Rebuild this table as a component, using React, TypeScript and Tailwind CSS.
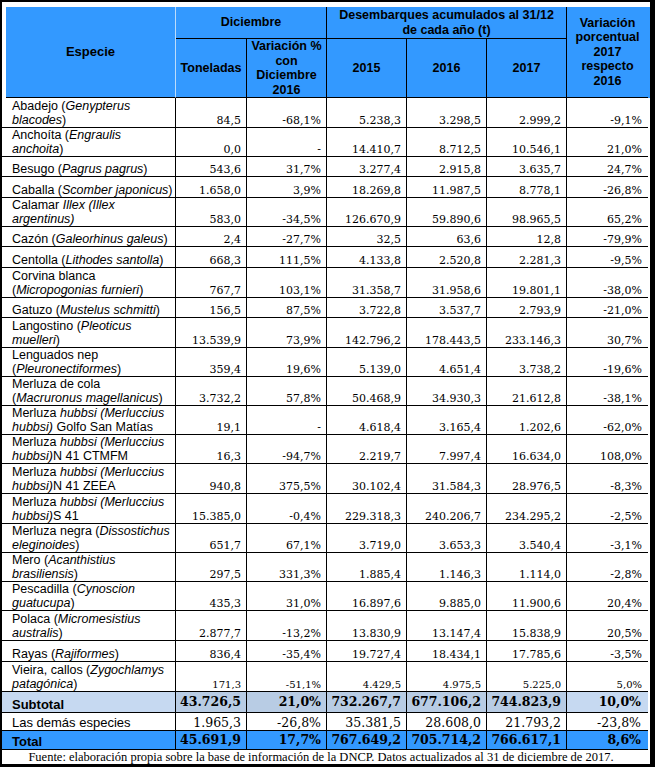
import React from "react";

type Row = { h: string; name: React.ReactNode; v: string[]; small?: boolean };

const rows: Row[] = [
  { h: "h-[30px]", name: <>Abadejo (<i>Genypterus</i><br /><i>blacodes</i>)</>, v: ["84,5", "-68,1%", "5.238,3", "3.298,5", "2.999,2", "-9,1%"] },
  { h: "h-[29px]", name: <>Anchoíta (<i>Engraulis</i><br /><i>anchoita</i>)</>, v: ["0,0", "-", "14.410,7", "8.712,5", "10.546,1", "21,0%"] },
  { h: "h-[20px]", name: <>Besugo (<i>Pagrus pagrus</i>)</>, v: ["543,6", "31,7%", "3.277,4", "2.915,8", "3.635,7", "24,7%"] },
  { h: "h-[21px]", name: <>Caballa (<i>Scomber japonicus</i>)</>, v: ["1.658,0", "3,9%", "18.269,8", "11.987,5", "8.778,1", "-26,8%"] },
  { h: "h-[29px]", name: <>Calamar <i>Illex (Illex</i><br /><i>argentinus)</i></>, v: ["583,0", "-34,5%", "126.670,9", "59.890,6", "98.965,5", "65,2%"] },
  { h: "h-[20px]", name: <>Cazón (<i>Galeorhinus galeus</i>)</>, v: ["2,4", "-27,7%", "32,5", "63,6", "12,8", "-79,9%"] },
  { h: "h-[21px]", name: <>Centolla (<i>Lithodes santolla</i>)</>, v: ["668,3", "111,5%", "4.133,8", "2.520,8", "2.281,3", "-9,5%"] },
  { h: "h-[30px]", name: <>Corvina blanca<br />(<i>Micropogonias furnieri</i>)</>, v: ["767,7", "103,1%", "31.358,7", "31.958,6", "19.801,1", "-38,0%"] },
  { h: "h-[20px]", name: <>Gatuzo (<i>Mustelus schmitti</i>)</>, v: ["156,5", "87,5%", "3.722,8", "3.537,7", "2.793,9", "-21,0%"] },
  { h: "h-[30px]", name: <>Langostino (<i>Pleoticus</i><br /><i>muelleri</i>)</>, v: ["13.539,9", "73,9%", "142.796,2", "178.443,5", "233.146,3", "30,7%"] },
  { h: "h-[29px]", name: <>Lenguados nep<br />(<i>Pleuronectiformes</i>)</>, v: ["359,4", "19,6%", "5.139,0", "4.651,4", "3.738,2", "-19,6%"] },
  { h: "h-[29px]", name: <>Merluza de cola<br />(<i>Macruronus magellanicus</i>)</>, v: ["3.732,2", "57,8%", "50.468,9", "34.930,3", "21.612,8", "-38,1%"] },
  { h: "h-[29px]", name: <>Merluza <i>hubbsi (Merluccius</i><br /><i>hubbsi)</i> Golfo San Matías</>, v: ["19,1", "-", "4.618,4", "3.165,4", "1.202,6", "-62,0%"] },
  { h: "h-[29px]", name: <>Merluza <i>hubbsi (Merluccius</i><br /><i>hubbsi)</i>N 41 CTMFM</>, v: ["16,3", "-94,7%", "2.219,7", "7.997,4", "16.634,0", "108,0%"] },
  { h: "h-[30px]", name: <>Merluza <i>hubbsi (Merluccius</i><br /><i>hubbsi)</i>N 41 ZEEA</>, v: ["940,8", "375,5%", "30.102,4", "31.584,3", "28.976,5", "-8,3%"] },
  { h: "h-[30px]", name: <>Merluza <i>hubbsi (Merluccius</i><br /><i>hubbsi)</i>S 41</>, v: ["15.385,0", "-0,4%", "229.318,3", "240.206,7", "234.295,2", "-2,5%"] },
  { h: "h-[29px]", name: <>Merluza negra (<i>Dissostichus</i><br /><i>eleginoides</i>)</>, v: ["651,7", "67,1%", "3.719,0", "3.653,3", "3.540,4", "-3,1%"] },
  { h: "h-[29px]", name: <>Mero (<i>Acanthistius</i><br /><i>brasiliensis</i>)</>, v: ["297,5", "331,3%", "1.885,4", "1.146,3", "1.114,0", "-2,8%"] },
  { h: "h-[29px]", name: <>Pescadilla (<i>Cynoscion</i><br /><i>guatucupa</i>)</>, v: ["435,3", "31,0%", "16.897,6", "9.885,0", "11.900,6", "20,4%"] },
  { h: "h-[30px]", name: <>Polaca (<i>Micromesistius</i><br /><i>australis</i>)</>, v: ["2.877,7", "-13,2%", "13.830,9", "13.147,4", "15.838,9", "20,5%"] },
  { h: "h-[21px]", name: <>Rayas (<i>Rajiformes</i>)</>, v: ["836,4", "-35,4%", "19.727,4", "18.434,1", "17.785,6", "-3,5%"] },
  { h: "h-[30px]", name: <>Vieira, callos (<i>Zygochlamys</i><br /><i>patagónica</i>)</>, v: ["171,3", "-51,1%", "4.429,5", "4.975,5", "5.225,0", "5,0%"], small: true },
];

const cols = "grid grid-cols-[174px_71px_80px_80px_80px_80px_81px]";

function BodyRow({ r }: { r: Row }) {
  return (
    <div className={`${cols} ${r.h} border-b border-black`}>
      <div className="flex items-end pl-[10px] border-r border-black text-[12.5px] leading-[14px] whitespace-nowrap">
        <div>{r.name}</div>
      </div>
      {r.v.map((v, i) => (
        <div
          key={i}
          className={`flex items-end justify-end ${i === 5 ? "pr-[6px]" : "pr-[5px] border-r border-black"} font-['DejaVu_Serif',serif] ${r.small ? "text-[10px]" : "text-[11px]"} leading-[13px] whitespace-nowrap`}
        >
          {v}
        </div>
      ))}
    </div>
  );
}

export default function App() {
  return (
    <div className="w-[655px] h-[767px] bg-white border-t-2 border-l-2 border-r-[5px] border-b-[3px] border-black flex flex-col font-['Liberation_Sans',Arial,sans-serif] text-black overflow-hidden">
      <div className="pt-[5px] pl-[4px]">
        <div className="grid grid-cols-[170px_71px_80px_80px_80px_80px_81px] grid-rows-[32px_59px] bg-[#3399ff] font-bold text-[12.5px] leading-[14.5px] text-center">
          <div className="row-span-2 flex items-center justify-center border-b border-r border-b-black border-r-[#bcdcfb] text-[13px]">
            Especie
          </div>
          <div className="col-span-2 flex items-center justify-center border-b border-r border-black">
            Diciembre
          </div>
          <div className="col-span-3 flex items-center justify-center border-b border-r border-black">
            Desembarques acumulados al 31/12
            <br />
            de cada año (t)
          </div>
          <div className="row-span-2 flex items-center justify-center border-b border-black">
            Variación
            <br />
            porcentual
            <br />
            2017
            <br />
            respecto
            <br />
            2016
          </div>
          <div className="flex items-center justify-center border-b border-r border-black">Toneladas</div>
          <div className="flex items-center justify-center border-b border-r border-black">
            Variación %
            <br />
            con
            <br />
            Diciembre
            <br />
            2016
          </div>
          <div className="flex items-center justify-center border-b border-r border-black">2015</div>
          <div className="flex items-center justify-center border-b border-r border-black">2016</div>
          <div className="flex items-center justify-center border-b border-r border-black">2017</div>
        </div>
      </div>

      <div className="w-[646px] flex flex-col">
        {rows.map((r, i) => (
          <BodyRow key={i} r={r} />
        ))}

        {/* Subtotal */}
        <div className={`${cols} h-[21px] border-b border-black`}>
          <div className="flex items-end pl-[10px] border-r border-black bg-[#c6d9f1] text-[13px] leading-[14px] font-bold">
            Subtotal
          </div>
          {["43.726,5", "21,0%", "732.267,7", "677.106,2", "744.823,9", "10,0%"].map((v, i) => (
            <div
              key={i}
              className={`flex items-center justify-end font-['DejaVu_Serif',serif] font-bold text-[12.5px] leading-[14px] ${i === 5 ? "pr-[7px] bg-[#c6d9f1]" : "pr-[5px] border-r border-black bg-[#b8cce4]"}`}
            >
              {v}
            </div>
          ))}
        </div>

        {/* Las demás especies */}
        <div className={`${cols} h-[18px] border-b border-black`}>
          <div className="flex items-end pl-[10px] border-r border-black text-[13px] leading-[14px]">
            Las demás especies
          </div>
          {["1.965,3", "-26,8%", "35.381,5", "28.608,0", "21.793,2", "-23,8%"].map((v, i) => (
            <div
              key={i}
              className={`flex items-end justify-end font-['DejaVu_Serif',serif] text-[12.5px] leading-[14px] ${i === 5 ? "pr-[7px]" : "pr-[5px] border-r border-black"}`}
            >
              {v}
            </div>
          ))}
        </div>

        {/* Total */}
        <div className={`${cols} h-[19px] border-b border-black bg-[#3399ff]`}>
          <div className="flex items-end pl-[10px] border-r border-black text-[13px] leading-[14px] font-bold">
            Total
          </div>
          {["45.691,9", "17,7%", "767.649,2", "705.714,2", "766.617,1", "8,6%"].map((v, i) => (
            <div
              key={i}
              className={`flex items-center justify-end font-['DejaVu_Serif',serif] font-bold text-[12.5px] leading-[14px] ${i === 5 ? "pr-[7px]" : "pr-[5px] border-r border-black"}`}
            >
              {v}
            </div>
          ))}
        </div>
      </div>

      <div className="h-[14px] w-[646px] text-center font-['Liberation_Serif','Times_New_Roman',serif] text-[12.5px] leading-[14px] whitespace-nowrap pr-[8px]">
        Fuente: elaboración propia sobre la base de información de la DNCP. Datos actualizados al 31 de diciembre de 2017.
      </div>
    </div>
  );
}
